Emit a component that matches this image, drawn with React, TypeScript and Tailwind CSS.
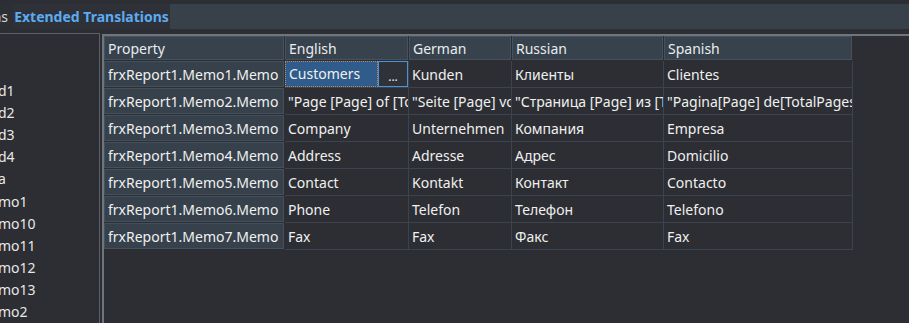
import React from "react";

const font = { fontFamily: '"Noto Sans", "Open Sans", sans-serif' };

const treeItems = ["d1", "d2", "d3", "d4", "a", "mo1", "mo10", "mo11", "mo12", "mo13", "mo2"];

const rows: string[][] = [
  ["frxReport1.Memo1.Memo", "Customers", "Kunden", "Клиенты", "Clientes"],
  [
    "frxReport1.Memo2.Memo",
    '"Page [Page] of [TotalPages]"',
    '"Seite [Page] von [TotalPages]"',
    '"Страница [Page] из [TotalPages]"',
    '"Pagina[Page] de[TotalPages]"',
  ],
  ["frxReport1.Memo3.Memo", "Company", "Unternehmen", "Компания", "Empresa"],
  ["frxReport1.Memo4.Memo", "Address", "Adresse", "Адрес", "Domicilio"],
  ["frxReport1.Memo5.Memo", "Contact", "Kontakt", "Контакт", "Contacto"],
  ["frxReport1.Memo6.Memo", "Phone", "Telefon", "Телефон", "Telefono"],
  ["frxReport1.Memo7.Memo", "Fax", "Fax", "Факс", "Fax"],
];

const headers = ["Property", "English", "German", "Russian", "Spanish"];

export default function App() {
  return (
    <div
      className="w-[909px] h-[323px] bg-[#2c2e33] overflow-hidden flex flex-col text-[14px] text-[#f0f0f0]"
      style={font}
    >
      <div className="h-[4px] shrink-0" />
      {/* tab strip */}
      <div className="h-[25px] shrink-0 flex bg-[#38414a]">
        <div className="w-[13px] overflow-hidden flex justify-end items-center bg-[#2c2f34] text-[#d4d8dc] whitespace-nowrap">
          <span className="pr-[5px]">Translations</span>
        </div>
        <div className="w-[157px] flex items-center justify-center bg-[#2e3238] font-bold text-[#5cabf2] whitespace-nowrap">
          Extended Translations
        </div>
      </div>
      <div className="h-[4px] shrink-0" />
      <div className="flex-1 flex min-h-0">
        {/* left tree panel */}
        <div className="w-[100px] shrink-0 border-t border-r border-[#5a6068] overflow-hidden pt-[45px] text-[#e8e8e8]">
          {treeItems.map((t) => (
            <div key={t} className="h-[22.2px] flex items-center whitespace-nowrap -ml-[2px]">
              {t}
            </div>
          ))}
        </div>
        <div className="w-[2px] shrink-0" />
        {/* grid panel */}
        <div className="flex-1 mt-[1px] border-t-2 border-l-2 border-[#6e757d] overflow-hidden">
          <div className="grid grid-cols-[181px_124px_103px_152px_189px] w-[749px]">
            {headers.map((h) => (
              <div
                key={h}
                className="h-[25px] flex items-center pl-[4px] bg-[#37424d] border-r border-b border-[#2c2e33] shadow-[inset_0_0_0_1px_#46525e] text-[#e8ecef]"
              >
                {h}
              </div>
            ))}
            {rows.map((r, ri) =>
              r.map((c, ci) => {
                if (ci === 0) {
                  return (
                    <div
                      key={ri + "-" + ci}
                      className="h-[27px] flex items-center pl-[4px] bg-[#36414b] border-r border-b border-[#2c2e33] shadow-[inset_0_0_0_1px_#44505b] whitespace-nowrap overflow-hidden"
                    >
                      {c}
                    </div>
                  );
                }
                if (ri === 0 && ci === 1) {
                  return (
                    <div
                      key={ri + "-" + ci}
                      className="h-[27px] flex border-r border-b border-[#3b444e]"
                    >
                      <div className="flex-1 flex items-center pl-[3px] pb-[2px] bg-[#2f5c8a] border border-dotted border-[#b88a62] whitespace-nowrap overflow-hidden">
                        {c}
                      </div>
                      <div className="w-[30px] flex items-center justify-center border border-[#4c92d6] bg-[#2f3339] text-[12px] pt-[6px] leading-none">
                        ...
                      </div>
                    </div>
                  );
                }
                return (
                  <div
                    key={ri + "-" + ci}
                    className="h-[27px] flex items-center pl-[3px] border-r border-b border-[#3b444e] whitespace-nowrap overflow-hidden"
                  >
                    {c}
                  </div>
                );
              })
            )}
          </div>
        </div>
      </div>
    </div>
  );
}
